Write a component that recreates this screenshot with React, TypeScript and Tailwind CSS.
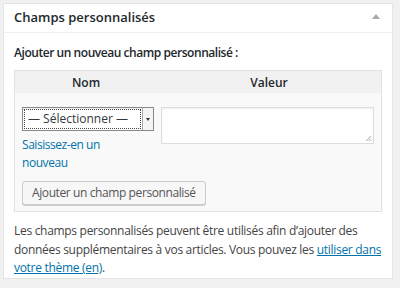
export default function App() {
  return (
    <div className="h-[288px] w-[400px] bg-[#f1f1f1] pt-[3px] pl-[3px] font-['Open_Sans',sans-serif] text-[#444]">
      <div className="w-[390px] h-[276px] border border-[#e5e5e5] bg-white">
        <div className="flex h-[29px] items-center justify-between border-b border-[#eee] pl-[10px] pr-[12px]">
          <h2 className="text-[13px] font-semibold text-[#23282d]">Champs personnalisés</h2>
          <span className="mt-[-4px] h-0 w-0 border-x-[4px] border-b-[5px] border-x-transparent border-b-[#aaa]" />
        </div>
        <div className="px-[10px]">
          <p className="mt-[11px] text-[12px] font-semibold tracking-[-0.45px] text-[#23282d]">Ajouter un nouveau champ personnalisé :</p>
          <div className="mt-[8px] w-[368px] border border-[#e1e1e1] bg-[#f9f9f9]">
            <div className="flex h-[22px] bg-[#f1f1f1] text-[12px] font-semibold text-[#23282d]">
              <div className="w-[142px] pt-[3px] text-center">Nom</div>
              <div className="flex-1 pt-[3px] text-center">Valeur</div>
            </div>
            <div className="flex gap-[7px] px-[7px] pt-[14px]">
              <div className="w-[132px]">
                <div className="flex h-[24px] border border-[#888] bg-white shadow-[inset_0_1px_2px_rgba(0,0,0,0.07)]">
                  <div className="m-[1px] flex flex-1 items-center border border-dotted border-[#444] pl-[3px] text-[12px] text-[#32373c]">
                    — Sélectionner —
                  </div>
                  <div className="flex w-[11px] items-center justify-center border-l border-[#aaa] bg-[#f4f4f4]">
                    <span className="h-0 w-0 border-x-[2.5px] border-t-[3px] border-x-transparent border-t-[#333]" />
                  </div>
                </div>
                <a className="mt-[5px] block w-[100px] text-[12px] leading-[18px] tracking-[-0.45px] text-[#0073aa]">Saisissez-en un nouveau</a>
              </div>
              <div className="relative h-[37px] flex-1 border border-[#ddd] bg-white shadow-[inset_0_1px_2px_rgba(0,0,0,0.07)]">
                <svg className="absolute bottom-[1px] right-[1px]" width="7" height="7" viewBox="0 0 7 7">
                  <path d="M6 1 L1 6 M6 3.5 L3.5 6 M6 5.5 L5.5 6" stroke="#aaa" strokeWidth="1" />
                </svg>
              </div>
            </div>
            <div className="px-[7px] pt-[7px] pb-[6px]">
              <button className="h-[24px] rounded-[3px] border border-[#ccc] bg-[#f7f7f7] px-[9px] text-[12px] tracking-[-0.4px] text-[#555] shadow-[0_1px_0_#ccc]">
                Ajouter un champ personnalisé
              </button>
            </div>
          </div>
          <p className="mt-[10px] text-[12px] leading-[18.5px] tracking-[-0.3px] text-[#444]">
            Les champs personnalisés peuvent être utilisés afin d’ajouter des données supplémentaires à vos articles. Vous pouvez les{" "}
            <a className="text-[#0073aa] underline">utiliser dans votre thème (en)</a>.
          </p>
        </div>
      </div>
    </div>
  );
}
